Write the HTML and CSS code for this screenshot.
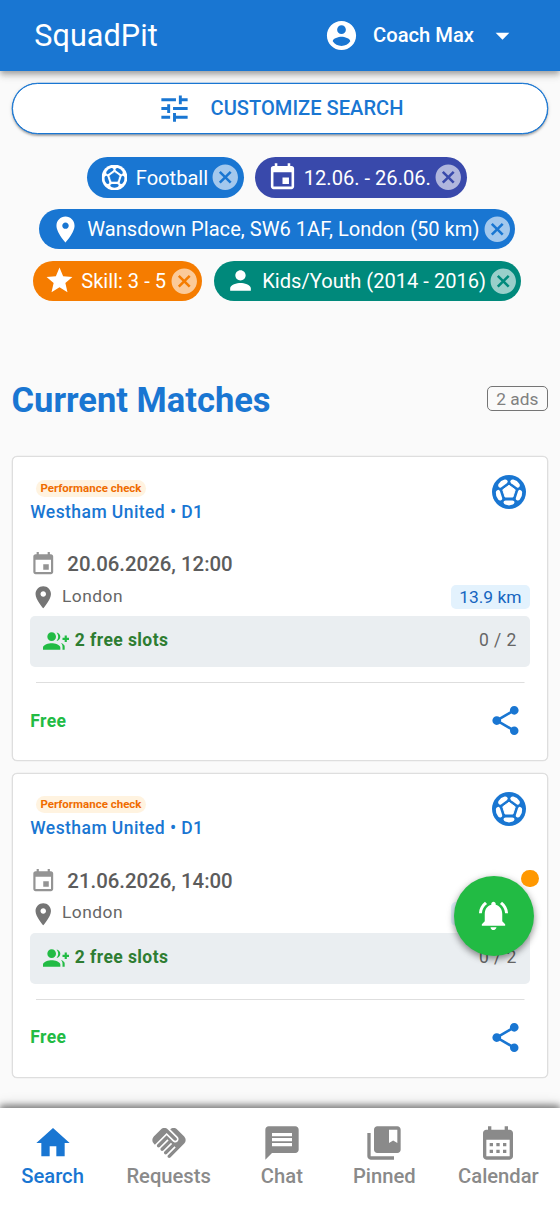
FILE: index.html
```html
<!DOCTYPE html>
<html lang="en">
<head>
<meta charset="utf-8">
<title>SquadPit</title>
<link rel="stylesheet" href="styles.css">
</head>
<body>
<svg class="sprite" aria-hidden="true">
  <defs>
    <mask id="ball-holes">
      <circle cx="17" cy="17" r="17" fill="#fff"/>
      <path d="M17 10.3 23.2 14.8 20.9 22H13.1L10.8 14.8z" fill="#000" stroke="#000" stroke-width="1" stroke-linejoin="round"/>
      <g fill="#000">
        <path id="panel" d="M13.6 25.4h6.8q2.3 0 2 2.2-.2 1.4-1.6 2-3.8 1.6-7.6 0-1.4-.6-1.6-2-.3-2.2 2-2.2z"/>
        <use href="#panel" transform="rotate(72 17 17)"/>
        <use href="#panel" transform="rotate(144 17 17)"/>
        <use href="#panel" transform="rotate(216 17 17)"/>
        <use href="#panel" transform="rotate(288 17 17)"/>
      </g>
    </mask>
  </defs>
  <symbol id="ball" viewBox="0 0 34 34"><rect width="34" height="34" mask="url(#ball-holes)"/></symbol>
  <symbol id="tune" viewBox="0 0 24 24"><path d="M3 17v2h6v-2H3zM3 5v2h10V5H3zm10 16v-2h8v-2h-8v-2h-2v6h2zM7 9v2H3v2h4v2h2V9H7zm14 4v-2H11v2h10zm-6-4h2V7h4V5h-4V3h-2v6z"/></symbol>
  <symbol id="account" viewBox="0 0 24 24"><path d="M12 2C6.48 2 2 6.48 2 12s4.48 10 10 10 10-4.48 10-10S17.52 2 12 2zm0 3c1.66 0 3 1.34 3 3s-1.34 3-3 3-3-1.34-3-3 1.34-3 3-3zm0 14.2c-2.5 0-4.71-1.28-6-3.22.03-1.99 4-3.08 6-3.08 1.99 0 5.97 1.09 6 3.08-1.29 1.94-3.5 3.22-6 3.22z"/></symbol>
  <symbol id="down" viewBox="0 0 24 24"><path d="M7 10l5 5 5-5z"/></symbol>
  <symbol id="event" viewBox="0 0 24 24"><path d="M17 12h-5v5h5v-5zM16 1v2H8V1H6v2H5c-1.11 0-1.99.9-1.99 2L3 19c0 1.1.89 2 2 2h14c1.1 0 2-.9 2-2V5c0-1.1-.9-2-2-2h-1V1h-2zm3 18H5V8h14v11z"/></symbol>
  <symbol id="place" viewBox="0 0 24 24"><path d="M12 2C8.13 2 5 5.13 5 9c0 5.25 7 13 7 13s7-7.75 7-13c0-3.87-3.13-7-7-7zm0 9.5c-1.38 0-2.5-1.12-2.5-2.5s1.12-2.5 2.5-2.5 2.5 1.12 2.5 2.5-1.12 2.5-2.5 2.5z"/></symbol>
  <symbol id="star" viewBox="0 0 24 24"><path d="M12 17.27L18.18 21l-1.64-7.03L22 9.24l-7.19-.61L12 2 9.19 8.63 2 9.24l5.46 4.73L5.82 21z"/></symbol>
  <symbol id="person" viewBox="0 0 24 24"><path d="M12 12c2.21 0 4-1.79 4-4s-1.79-4-4-4-4 1.79-4 4 1.79 4 4 4zm0 2c-2.67 0-8 1.34-8 4v2h16v-2c0-2.66-5.33-4-8-4z"/></symbol>
  <symbol id="cancel" viewBox="0 0 24 24"><path d="M12 2C6.47 2 2 6.47 2 12s4.47 10 10 10 10-4.47 10-10S17.53 2 12 2zm5 13.59L15.59 17 12 13.41 8.41 17 7 15.59 10.59 12 7 8.41 8.41 7 12 10.59 15.59 7 17 8.41 13.41 12 17 15.59z"/></symbol>
  <symbol id="group-add" viewBox="0 0 24 24"><path d="M22 9V7h-2v2h-2v2h2v2h2v-2h2V9zM8 12c2.21 0 4-1.79 4-4s-1.79-4-4-4-4 1.79-4 4 1.79 4 4 4zm0 2c-2.67 0-8 1.34-8 4v2h16v-2c0-2.66-5.33-4-8-4zm4.51-9.95C13.43 5.11 14 6.49 14 8s-.57 2.89-1.49 3.95C14.47 11.7 16 10.04 16 8s-1.53-3.7-3.49-3.95zm4.02 9.78C17.42 14.66 18 15.7 18 17v3h2v-3c0-1.45-1.59-2.51-3.47-3.17z"/></symbol>
  <symbol id="share" viewBox="0 0 24 24"><path d="M18 16.08c-.76 0-1.44.3-1.96.77L8.91 12.7c.05-.23.09-.46.09-.7s-.04-.47-.09-.7l7.05-4.11c.54.5 1.25.81 2.04.81 1.66 0 3-1.34 3-3s-1.34-3-3-3-3 1.34-3 3c0 .24.04.47.09.7L8.04 9.81C7.5 9.31 6.79 9 6 9c-1.66 0-3 1.34-3 3s1.34 3 3 3c.79 0 1.5-.31 2.04-.81l7.12 4.16c-.05.21-.08.43-.08.65 0 1.61 1.31 2.92 2.92 2.92 1.61 0 2.92-1.31 2.92-2.92s-1.31-2.92-2.92-2.92z"/></symbol>
  <symbol id="bell" viewBox="0 0 24 24"><path d="M7.58 4.08L6.15 2.65C3.75 4.48 2.17 7.3 2.03 10.5h2c.15-2.65 1.51-4.97 3.55-6.42zm12.39 6.42h2c-.15-3.2-1.73-6.02-4.12-7.85l-1.42 1.43c2.02 1.45 3.39 3.77 3.54 6.42zM18 11c0-3.07-1.64-5.64-4.5-6.32V4c0-.83-.67-1.5-1.5-1.5s-1.5.67-1.5 1.5v.68C7.63 5.36 6 7.92 6 11v5l-2 2v1h16v-1l-2-2v-5zm-6 11c.14 0 .27-.01.4-.04.65-.14 1.18-.58 1.44-1.18.1-.24.15-.5.15-.78h-4c.01 1.1.9 2 2.01 2z"/></symbol>
  <symbol id="home" viewBox="0 0 24 24"><path d="M10 20v-6h4v6h5v-8h3L12 3 2 12h3v8z"/></symbol>
  <symbol id="handshake" viewBox="0 0 24 24"><path d="M16.48 10.41c-.39.39-1.04.39-1.43 0l-4.47-4.46-7.05 7.04-.66-.63c-1.17-1.17-1.17-3.07 0-4.24l4.24-4.24c1.17-1.17 3.07-1.17 4.24 0L16.48 9c.39.39.39 1.02 0 1.41zm.7-2.12c.78.78.78 2.05 0 2.83-1.27 1.27-2.61.22-2.83 0l-3.76-3.76-5.57 5.57c-.39.39-.39 1.02 0 1.41.39.39 1.02.39 1.42 0l4.62-4.62.71.71-4.62 4.62c-.39.39-.39 1.02 0 1.41.39.39 1.02.39 1.42 0l4.62-4.62.71.71-4.62 4.62c-.39.39-.39 1.02 0 1.41.39.39 1.02.39 1.41 0l4.62-4.62.71.71-4.62 4.62c-.39.39-.39 1.02 0 1.41.39.39 1.02.39 1.41 0l8.32-8.34c1.17-1.17 1.17-3.07 0-4.24l-4.24-4.24c-1.15-1.15-3.01-1.17-4.18-.06l4.47 4.47z"/></symbol>
  <symbol id="message" viewBox="0 0 24 24"><path d="M20 2H4c-1.1 0-1.99.9-1.99 2L2 22l4-4h14c1.1 0 2-.9 2-2V4c0-1.1-.9-2-2-2zm-2 12H6v-2h12v2zm0-3H6V9h12v2zm0-3H6V6h12v2z"/></symbol>
  <symbol id="bookmark" viewBox="0 0 24 24"><path d="M4 6H2v14c0 1.1.9 2 2 2h14v-2H4V6z"/><path d="M20 2H8c-1.1 0-2 .9-2 2v12c0 1.1.9 2 2 2h12c1.1 0 2-.9 2-2V4c0-1.1-.9-2-2-2zm0 10l-2.5-1.5L15 12V4h5v8z"/></symbol>
  <symbol id="calendar" viewBox="0 0 24 24"><path d="M19 4h-1V2h-2v2H8V2H6v2H5c-1.11 0-1.99.9-1.99 2L3 20c0 1.1.89 2 2 2h14c1.1 0 2-.9 2-2V6c0-1.1-.9-2-2-2zm0 16H5V10h14v10zM9 14H7v-2h2v2zm4 0h-2v-2h2v2zm4 0h-2v-2h2v2zm-8 4H7v-2h2v2zm4 0h-2v-2h2v2zm4 0h-2v-2h2v2z"/></symbol>
</svg>

<header class="topbar">
  <div class="brand">SquadPit</div>
  <div class="user">
    <svg class="user-icon"><use href="#account"/></svg>
    <span class="user-name">Coach Max</span>
    <svg class="user-caret"><use href="#down"/></svg>
  </div>
</header>

<main class="page">
  <button class="customize"><svg><use href="#tune"/></svg><span>CUSTOMIZE SEARCH</span></button>

  <div class="filters">
    <div class="filter-row">
      <div class="chip chip-sport"><svg class="chip-icon chip-ball"><use href="#ball"/></svg><span>Football</span><svg class="chip-close"><use href="#cancel"/></svg></div>
      <div class="chip chip-date"><svg class="chip-icon"><use href="#event"/></svg><span>12.06. - 26.06.</span><svg class="chip-close"><use href="#cancel"/></svg></div>
    </div>
    <div class="filter-row">
      <div class="chip chip-place"><svg class="chip-icon"><use href="#place"/></svg><span>Wansdown Place, SW6 1AF, London (50 km)</span><svg class="chip-close"><use href="#cancel"/></svg></div>
    </div>
    <div class="filter-row">
      <div class="chip chip-skill"><svg class="chip-icon"><use href="#star"/></svg><span>Skill: 3 - 5</span><svg class="chip-close"><use href="#cancel"/></svg></div>
      <div class="chip chip-age"><svg class="chip-icon"><use href="#person"/></svg><span>Kids/Youth (2014 - 2016)</span><svg class="chip-close"><use href="#cancel"/></svg></div>
    </div>
  </div>

  <div class="section-head">
    <h1>Current Matches</h1>
    <span class="count">2 ads</span>
  </div>

  <article class="card">
    <div class="card-head">
      <div><span class="tag">Performance check</span><div class="team">Westham United • D1</div></div>
      <svg class="card-ball"><use href="#ball"/></svg>
    </div>
    <div class="when"><svg><use href="#event"/></svg><span>20.06.2026, 12:00</span></div>
    <div class="where"><svg><use href="#place"/></svg><span class="city">London</span><span class="distance">13.9 km</span></div>
    <div class="slots"><svg><use href="#group-add"/></svg><span class="slots-free">2 free slots</span><span class="slots-count">0 / 2</span></div>
    <div class="card-foot"><span class="price">Free</span><svg><use href="#share"/></svg></div>
  </article>

  <article class="card">
    <div class="card-head">
      <div><span class="tag">Performance check</span><div class="team">Westham United • D1</div></div>
      <svg class="card-ball"><use href="#ball"/></svg>
    </div>
    <div class="when"><svg><use href="#event"/></svg><span>21.06.2026, 14:00</span></div>
    <div class="where"><svg><use href="#place"/></svg><span class="city">London</span><span class="distance">13.9 km</span></div>
    <div class="slots"><svg><use href="#group-add"/></svg><span class="slots-free">2 free slots</span><span class="slots-count">0 / 2</span></div>
    <div class="card-foot"><span class="price">Free</span><svg><use href="#share"/></svg></div>
  </article>
</main>

<button class="fab" aria-label="Notifications"><svg><use href="#bell"/></svg><span class="fab-dot"></span></button>

<nav class="tabs">
  <a class="tab tab-active"><svg><use href="#home"/></svg><span>Search</span></a>
  <a class="tab"><svg><use href="#handshake"/></svg><span>Requests</span></a>
  <a class="tab tab-chat"><svg><use href="#message"/></svg><span>Chat</span></a>
  <a class="tab"><svg><use href="#bookmark"/></svg><span>Pinned</span></a>
  <a class="tab"><svg><use href="#calendar"/></svg><span>Calendar</span></a>
</nav>
</body>
</html>
```
FILE: styles.css
```css
* { box-sizing: border-box; }
body {
  margin: 0;
  height: 1212px;
  position: relative;
  overflow: hidden;
  display: flex;
  flex-direction: column;
  background: #fafafa;
  font-family: Roboto, sans-serif;
  color: #666;
}
svg { fill: currentColor; flex: none; display: block; }
button { font-family: inherit; padding: 0; }
span { white-space: nowrap; }
.sprite { position: absolute; width: 0; height: 0; }

.topbar {
  height: 71.3px;
  flex: none;
  display: flex;
  align-items: center;
  justify-content: space-between;
  padding: 0 41px 0 34.3px;
  background: #1976d2;
  color: #fff;
  box-shadow: 0 3px 5px -1px rgba(0,0,0,.2), 0 5px 6px rgba(0,0,0,.14), 0 1px 13px rgba(0,0,0,.12);
}
.brand { font-size: 30.6px; line-height: 36px; letter-spacing: .05px; }
.user { display: flex; align-items: center; }
.user-icon { width: 35px; height: 35px; }
.user-name { font-size: 20.2px; font-weight: 500; margin: -2px 12px 0 14px; }
.user-caret { width: 33px; height: 33px; }

.page { flex: 1; padding: 11.9px 12px 0; display: flex; flex-direction: column; }
.customize {
  height: 51.3px;
  flex: none;
  display: flex;
  align-items: center;
  justify-content: center;
  gap: 19px;
  border: 1px solid #1976d2;
  border-radius: 26px;
  background: #fff;
  color: #1976d2;
  font-size: 20.1px;
  font-weight: 500;
  box-shadow: 0 0 0 .3px #1976d2, 0 2px 2px rgba(0,0,0,.25), 0 1px 4px rgba(0,0,0,.15);
}
.customize svg { width: 35px; height: 35px; }
.customize span { margin-top: -1.5px; }

.filters { display: flex; flex-direction: column; gap: 11.3px; padding: 22.9px 6px 0 0; }
.filter-row { display: flex; justify-content: center; gap: 11.5px; }
.chip {
  height: 40.4px;
  border-radius: 20.4px;
  display: flex;
  align-items: center;
  padding: 0 3px 0 11.5px;
  color: #fff;
  font-size: 20.1px;
}
.chip-icon { width: 31px; height: 31px; margin-right: 6px; }
.chip-ball { padding: 2.6px; }
.chip-close { width: 30.5px; height: 30.5px; margin-left: auto; opacity: .6; }
.chip-sport { width: 156.5px; background: #1976d2; }
.chip-date { width: 211.5px; background: #3949ab; }
.chip-place { width: 476.5px; background: #1976d2; }
.chip-skill { width: 169.5px; background: #f57c00; }
.chip-age { width: 307.5px; background: #00897b; }

.section-head { height: 155.2px; display: flex; align-items: center; justify-content: space-between; padding-top: 40px; }
h1 { margin: 2.5px 0 0 -.5px; font-size: 34.5px; line-height: 42px; font-weight: 700; color: #1976d2; }
.count {
  height: 25.5px;
  line-height: 24px;
  padding: 0 8.6px;
  border: 1px solid #757575;
  border-radius: 5px;
  font-size: 17.3px;
  color: #808080;
}

.card {
  height: 304.7px;
  flex: none;
  margin-bottom: 12px;
  padding: 0 17.3px;
  display: flex;
  flex-direction: column;
  background: #fff;
  border: 1px solid #dedede;
  border-radius: 5px;
  box-shadow: 0 0 0 .3px #dedede;
}
.card-head { height: 90px; display: flex; justify-content: space-between; }
.card-head > div { padding-top: 22.3px; }
.tag {
  display: block;
  width: 110.5px;
  height: 17px;
  line-height: 17.6px;
  margin-left: 5.4px;
  border-radius: 8.5px;
  background: #fff3e0;
  color: #ef6c00;
  font-size: 11.5px;
  font-weight: 700;
  text-align: center;
}
.team { margin-top: 5px; font-size: 17.5px; line-height: 21px; font-weight: 500; color: #1976d2; letter-spacing: .43px; }
.card-ball { width: 34px; height: 34px; margin: 17.5px 3.4px 0 0; color: #1976d2; }
.when { height: 33px; display: flex; align-items: center; gap: 11px; font-size: 20.4px; font-weight: 500; color: #5c5c5c; }
.when svg { width: 26.5px; height: 26.5px; color: #949494; margin-top: 1px; }
.when svg, .where svg { margin-left: -.5px; }
.where { height: 32px; display: flex; align-items: center; gap: 5.7px; font-size: 17.4px; }
.where svg { width: 26.5px; height: 26.5px; color: #757575; margin-top: 1.5px; }
.city { letter-spacing: .48px; margin-top: -1.5px; }
.distance {
  margin: 1.4px 0 0 auto;
  width: 78.7px;
  height: 24px;
  line-height: 24px;
  border-radius: 5px;
  background: #e3f2fd;
  color: #1565c0;
  text-align: center;
}
.slots {
  height: 51.3px;
  flex: none;
  margin-top: 3.5px;
  padding: 0 13px 2.4px 13px;
  display: flex;
  align-items: center;
  gap: 5.5px;
  border-radius: 5px;
  background: #eaeef1;
  font-size: 17.5px;
  letter-spacing: .42px;
}
.slots svg { width: 26px; height: 26px; color: #22bb44; margin-top: 2px; }
.slots-free { font-weight: 700; color: #2e7d32; }
.slots-count { margin-left: auto; }
.card-foot {
  height: 77px;
  margin-top: 15px;
  padding-right: 6.5px;
  display: flex;
  align-items: center;
  justify-content: space-between;
  background: linear-gradient(#dedede, #dedede) 50% 0 / calc(100% - 11.5px) 1px no-repeat;
}
.card-foot svg { width: 35px; height: 35px; color: #1976d2; }
.price { font-size: 17.5px; font-weight: 700; color: #22bb44; letter-spacing: .4px; }

.fab {
  position: absolute;
  left: 453.5px;
  top: 875.5px;
  width: 80.5px;
  height: 80.5px;
  display: flex;
  align-items: center;
  justify-content: center;
  border: 0;
  border-radius: 50%;
  background: #22bb44;
  color: #fff;
  box-shadow: 0 3px 6px rgba(0,0,0,.35), 0 2px 10px rgba(0,0,0,.15);
}
.fab svg { width: 35px; height: 35px; }
.fab-dot { position: absolute; right: -4.5px; top: -6px; width: 17.5px; height: 17.5px; border-radius: 50%; background: #ff9800; }

.tabs {
  height: 104px;
  flex: none;
  position: relative;
  display: flex;
  justify-content: space-around;
  padding-top: 14.5px;
  background: #fff;
  box-shadow: 0 -3px 6px rgba(0,0,0,.4), 0 -2px 13px rgba(0,0,0,.2);
}
.tab { display: flex; flex-direction: column; align-items: center; font-size: 20.2px; line-height: 24px; font-weight: 500; color: #8a8a8a; }
.tab svg { width: 40px; height: 40px; margin-bottom: 1.2px; }
.tab-active { color: #1976d2; }
.tab-chat { width: 57px; }
```
